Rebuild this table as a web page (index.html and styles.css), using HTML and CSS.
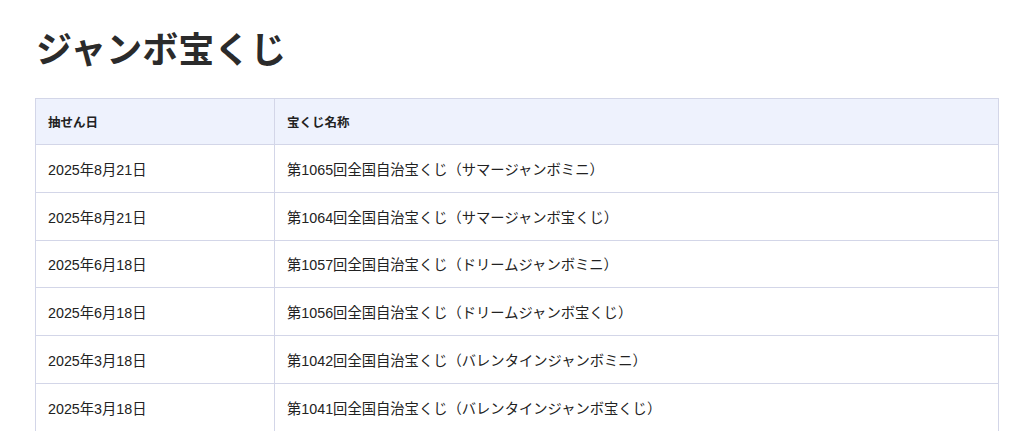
FILE: index.html
```html
<!DOCTYPE html>
<html lang="ja">
<head>
<meta charset="utf-8">
<title>ジャンボ宝くじ</title>
<link rel="stylesheet" href="styles.css">
</head>
<body>
<main class="page">
  <h1 class="title">ジャンボ宝くじ</h1>
  <table class="draws">
    <thead>
      <tr><th class="col-date">抽せん日</th><th>宝くじ名称</th></tr>
    </thead>
    <tbody>
      <tr><td>2025年8月21日</td><td>第1065回全国自治宝くじ（サマージャンボミニ）</td></tr>
      <tr><td>2025年8月21日</td><td>第1064回全国自治宝くじ（サマージャンボ宝くじ）</td></tr>
      <tr><td>2025年6月18日</td><td>第1057回全国自治宝くじ（ドリームジャンボミニ）</td></tr>
      <tr><td>2025年6月18日</td><td>第1056回全国自治宝くじ（ドリームジャンボ宝くじ）</td></tr>
      <tr><td>2025年3月18日</td><td>第1042回全国自治宝くじ（バレンタインジャンボミニ）</td></tr>
      <tr><td>2025年3月18日</td><td>第1041回全国自治宝くじ（バレンタインジャンボ宝くじ）</td></tr>
    </tbody>
  </table>
</main>
</body>
</html>
```
FILE: styles.css
```css
html, body {
  margin: 0;
  padding: 0;
  background: #ffffff;
}
body {
  font-family: "Liberation Sans", "Noto Sans CJK JP", sans-serif;
  color: #222222;
}
.page {
  padding: 22px 25px 0 35px;
}
.title {
  margin: 0 0 26px 1px;
  font-family: "Noto Sans CJK JP", sans-serif;
  font-size: 36px;
  line-height: 50px;
  font-weight: 700;
  color: #2b2b2b;
}
.draws {
  width: 100%;
  border-collapse: collapse;
  font-size: 14.3px;
}
.draws th,
.draws td {
  border: 1px solid #d3d6e8;
  padding: 0 12px;
  height: 46.8px;
  text-align: left;
  vertical-align: middle;
}
.draws th {
  height: 45px;
  background: #eef2fd;
  font-family: "Noto Sans CJK JP", sans-serif;
  font-size: 12.5px;
  font-weight: 700;
  color: #222222;
}
.draws td {
  font-weight: 400;
}
.col-date {
  width: 214px;
}
```
